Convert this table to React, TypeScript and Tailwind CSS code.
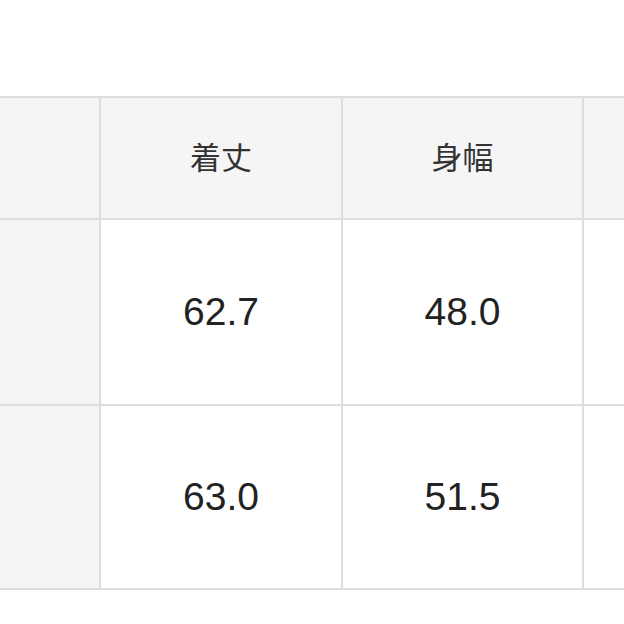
import React from 'react';

const headers = ['', '着丈', '身幅', ''];
const rows = [
  ['', '62.7', '48.0', ''],
  ['', '63.0', '51.5', ''],
];

const App: React.FC = () => {
  return (
    <div className="w-[624px] h-[624px] overflow-hidden bg-white pt-[96px]">
      <div
        className="ml-[-143px] w-max grid grid-cols-[240px_240px_239px_240px] grid-rows-[120px_184px_182px] gap-[2px] p-[2px] bg-[#dcdde0]"
        style={{ fontFamily: '"Liberation Sans", "Noto Sans CJK JP", sans-serif' }}
      >
        {headers.map((h, i) => (
          <div
            key={`h${i}`}
            className="bg-[#f5f5f6] flex items-center justify-center text-[31px] text-[#333] pt-[3px]"
          >
            {h}
          </div>
        ))}
        {rows.map((row, r) =>
          row.map((cell, c) => (
            <div
              key={`${r}-${c}`}
              className={`${c === 0 ? 'bg-[#f5f5f6]' : 'bg-white'} flex items-center justify-center text-[39px] text-[#222]`}
            >
              {cell}
            </div>
          ))
        )}
      </div>
    </div>
  );
};

export default App;
